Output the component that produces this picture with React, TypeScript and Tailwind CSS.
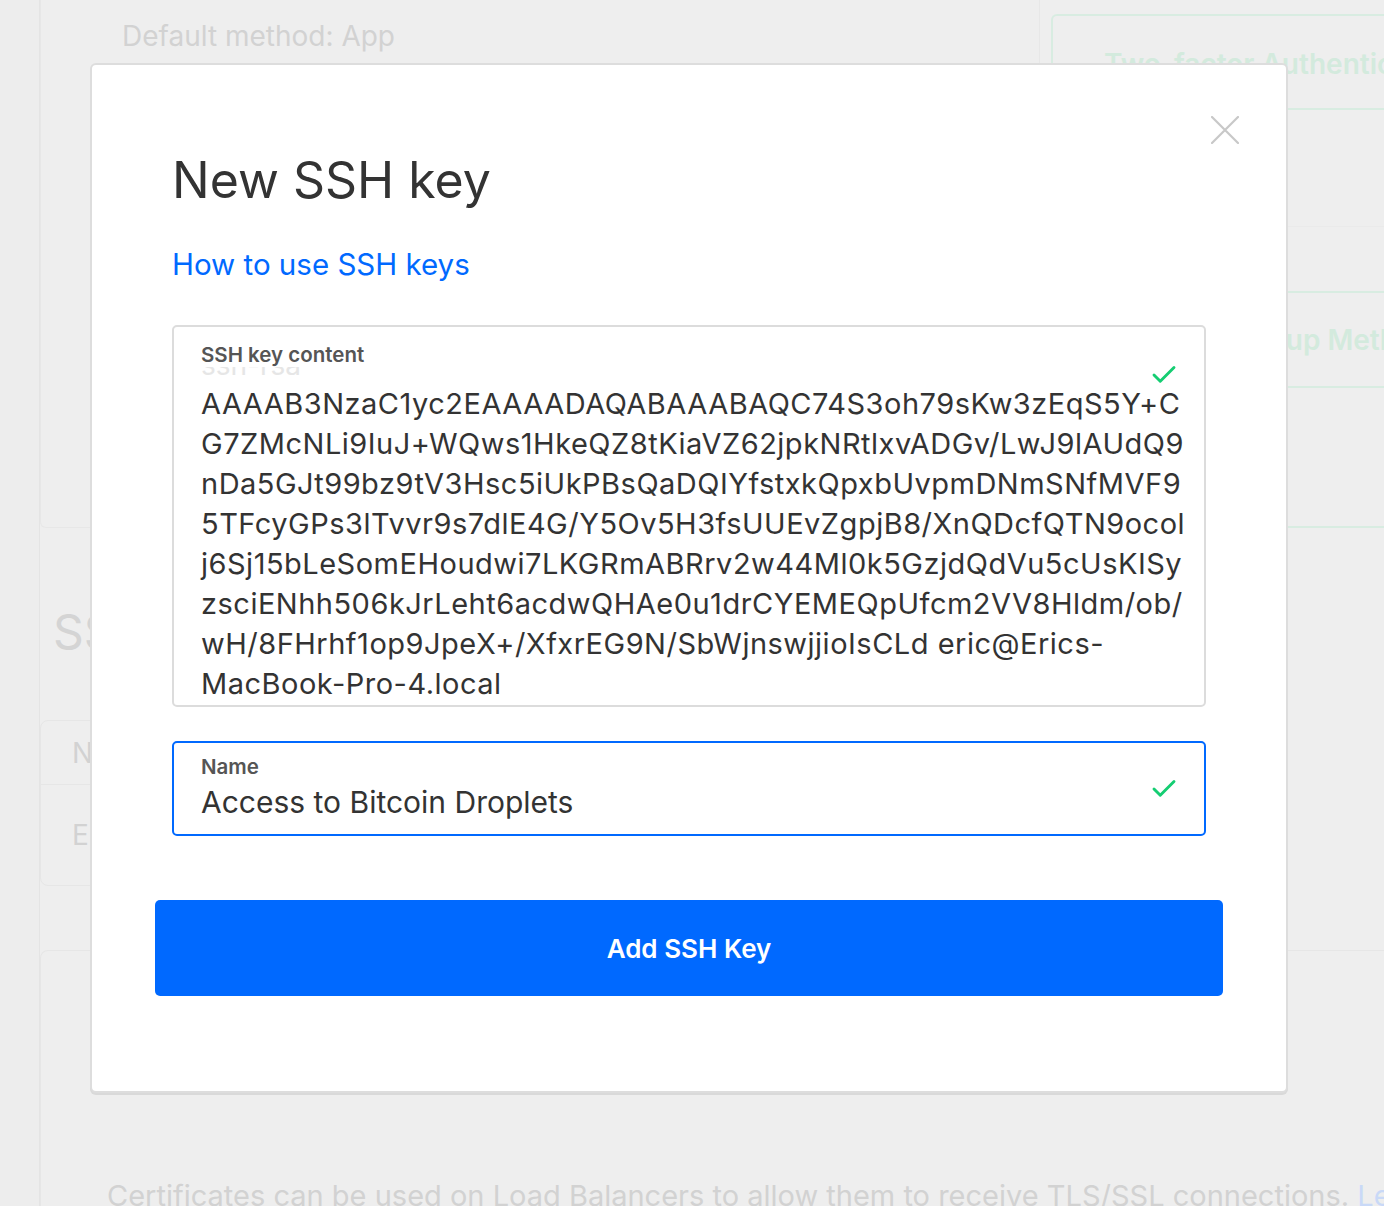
import { Check } from "lucide-react";

const keyLines = [
  "AAAAB3NzaC1yc2EAAAADAQABAAABAQC74S3oh79sKw3zEqS5Y+C",
  "G7ZMcNLi9IuJ+WQws1HkeQZ8tKiaVZ62jpkNRtlxvADGv/LwJ9lAUdQ9",
  "nDa5GJt99bz9tV3Hsc5iUkPBsQaDQIYfstxkQpxbUvpmDNmSNfMVF9",
  "5TFcyGPs3lTvvr9s7dlE4G/Y5Ov5H3fsUUEvZgpjB8/XnQDcfQTN9ocol",
  "j6Sj15bLeSomEHoudwi7LKGRmABRrv2w44Ml0k5GzjdQdVu5cUsKISy",
  "zsciENhh506kJrLeht6acdwQHAe0u1drCYEMEQpUfcm2VV8Hldm/ob/",
  "wH/8FHrhf1op9JpeX+/XfxrEG9N/SbWjnswjjioIsCLd eric@Erics-",
  "MacBook-Pro-4.local",
];

const Background = () => {
  return (
    <div className="flex h-full">
      <div className="w-[40px] shrink-0 border-r border-[#e4e4e4] bg-[#ededed]" />
      <div className="flex flex-1 flex-col">
        {/* top row */}
        <div className="flex h-[528px] shrink-0 gap-[11px]">
          <div className="w-[1000px] rounded-b-[6px] border border-t-0 border-[#e7e7e7] pl-[81px] pt-[16px]">
            <p className="text-[28px] leading-[40px] text-[#d2d2d2]">
              Default method: App
            </p>
          </div>
          <div className="mt-[14px] flex flex-1 flex-col rounded-tl-[6px] border-2 border-r-0 border-[#d8ece1]">
            <div className="flex h-[94px] shrink-0 items-center whitespace-nowrap border-b-2 border-[#d8ece1] pl-[51px] pt-[4px]">
              <span className="text-[28px] font-semibold text-[#d3eadd]">
                Two-factor Authentication
              </span>
            </div>
            <div className="h-[117px] shrink-0 border-b border-[#eaeaea]" />
            <div className="h-[66px] shrink-0 border-b-2 border-[#d8ece1]" />
            <div className="flex h-[95px] shrink-0 items-center whitespace-nowrap border-b-2 border-[#d8ece1] pl-[166px]">
              <span className="text-[28px] font-semibold text-[#d3eadd]">
                Backup Methods
              </span>
            </div>
            <div className="flex-1" />
          </div>
        </div>

        <h2 className="ml-[13px] mt-[75px] shrink-0 text-[48px] leading-[58px] text-[#d4d4d4]">
          SSH keys
        </h2>

        <div className="mt-[59px] h-[166px] w-[1100px] shrink-0 rounded-[8px] border border-[#e6e6e6]">
          <div className="flex h-[64px] items-center border-b border-[#e6e6e6] pl-[31px] text-[28px] text-[#d2d2d2]">
            Name
          </div>
          <div className="flex h-[100px] items-center pl-[31px] text-[28px] text-[#d2d2d2]">
            Eric
          </div>
        </div>

        <div className="mt-[64px] flex flex-1 flex-col rounded-t-[8px] border border-b-0 border-[#e6e6e6]">
          <div className="mt-[69px] flex shrink-0 justify-end">
            <div className="h-[94px] w-[57px] rounded-l-[6px] bg-[#e7e7e7]" />
          </div>
          <p className="ml-[66px] mt-[64px] shrink-0 whitespace-nowrap text-[29px] leading-[36px] text-[#d2d2d2]">
            Certificates can be used on Load Balancers to allow them to receive
            TLS/SSL connections.{" "}
            <span className="text-[#c9d9f7]">Learn more</span>
          </p>
        </div>
      </div>
    </div>
  );
};

const CloseIcon = () => (
  <svg width="28" height="28" viewBox="0 0 28 28" fill="none">
    <path
      d="M1 1L27 27M27 1L1 27"
      stroke="currentColor"
      strokeWidth="2.2"
      strokeLinecap="round"
    />
  </svg>
);

const App = () => {
  return (
    <div className="relative h-[1206px] w-full overflow-hidden bg-[#eeeeee] font-['Inter',sans-serif]">
      <Background />

      {/* modal */}
      <div className="absolute left-[90px] top-[63px] flex h-[1030px] w-[1198px] flex-col rounded-[6px] border-2 border-[#dddddd] bg-white shadow-[0_2px_0_#d9d9d9]">
        <button className="absolute right-[47px] top-[51px] text-[#c8c8c8]">
          <CloseIcon />
        </button>

        <div className="flex flex-col px-[80px] pt-[85px]">
          <h1 className="text-[50px] leading-[60px] text-[#333333]">
            New SSH key
          </h1>
          <a className="mt-[36px] text-[29.5px] leading-[36px] text-[#0069ff]">
            How to use SSH keys
          </a>

          {/* key content */}
          <div className="relative mt-[43px] h-[382px] overflow-hidden rounded-[5px] border-2 border-[#dcdcdc] pl-[27px] pt-[16px]">
            <label className="block text-[20.5px] font-semibold leading-[24px] text-[#555555]">
              SSH key content
            </label>
            <div className="h-[8px] overflow-hidden">
              <div className="-mt-[22px] text-[28px] leading-[40px] text-[#e6e6e6]">
                ssh-rsa
              </div>
            </div>
            <div className="mt-[9px] text-[29px] leading-[40px] tracking-[0.5px] text-[#333333]">
              {keyLines.map((line) => (
                <div key={line} className="whitespace-nowrap">
                  {line}
                </div>
              ))}
            </div>
            <Check
              className="absolute right-[25px] top-[33px] h-[30px] w-[30px] text-[#15cd72]"
              strokeWidth={2.3}
            />
          </div>

          {/* name */}
          <div className="relative mt-[34px] h-[95px] rounded-[5px] border-2 border-[#0069ff] pl-[27px] pt-[12px]">
            <label className="block text-[20.5px] font-semibold leading-[24px] text-[#555555]">
              Name
            </label>
            <div className="mt-[5px] text-[30px] leading-[36px] text-[#333333]">
              Access to Bitcoin Droplets
            </div>
            <Check
              className="absolute right-[25px] top-[31px] h-[30px] w-[30px] text-[#15cd72]"
              strokeWidth={2.3}
            />
          </div>

          <button className="-mx-[17px] mt-[64px] flex h-[96px] items-center justify-center rounded-[5px] bg-[#0069ff] text-[26px] font-semibold text-white">
            Add SSH Key
          </button>
        </div>
      </div>
    </div>
  );
};

export default App;
